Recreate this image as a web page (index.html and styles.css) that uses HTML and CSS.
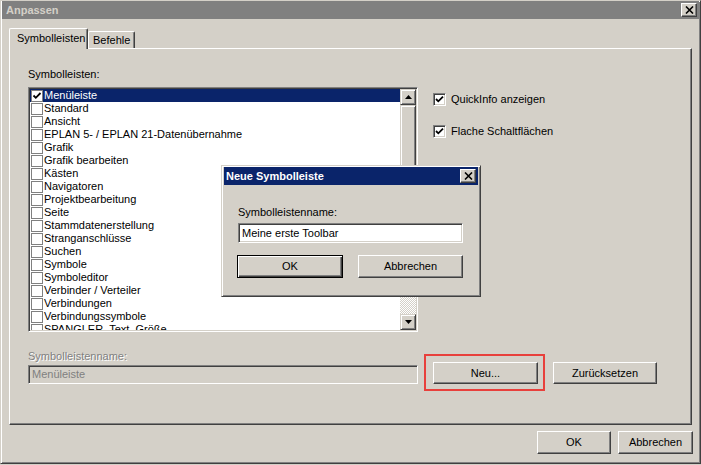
FILE: index.html
```html
<!DOCTYPE html>
<html>
<head>
<meta charset="utf-8">
<link rel="stylesheet" href="styles.css">
</head>
<body>
<div class="window">
  <div class="titlebar">
    <span class="title">Anpassen</span>
    <span class="closebtn"><svg width="9" height="8" viewBox="0 0 9 8"><path d="M1 0.5 L8 7.5 M8 0.5 L1 7.5" stroke="#000" stroke-width="1.6" fill="none"/></svg></span>
  </div>
  <div class="tabs">
    <div class="tab active">Symbolleisten</div>
    <div class="tab">Befehle</div>
  </div>
  <div class="panel">
    <div class="toprow">
      <div class="leftcol">
        <div class="label">Symbolleisten:</div>
        <div class="listbox">
          <div class="items">
            <div class="row selected"><span class="lbox"><svg width="10" height="10" viewBox="0 0 10 10"><path d="M1.5 4.5 L3.8 6.8 L8.5 2" stroke="#000" stroke-width="1.8" fill="none"/></svg></span><span class="rtext">Menüleiste</span></div>
            <div class="row"><span class="lbox"></span><span class="rtext">Standard</span></div>
            <div class="row"><span class="lbox"></span><span class="rtext">Ansicht</span></div>
            <div class="row"><span class="lbox"></span><span class="rtext">EPLAN 5- / EPLAN 21-Datenübernahme</span></div>
            <div class="row"><span class="lbox"></span><span class="rtext">Grafik</span></div>
            <div class="row"><span class="lbox"></span><span class="rtext">Grafik bearbeiten</span></div>
            <div class="row"><span class="lbox"></span><span class="rtext">Kästen</span></div>
            <div class="row"><span class="lbox"></span><span class="rtext">Navigatoren</span></div>
            <div class="row"><span class="lbox"></span><span class="rtext">Projektbearbeitung</span></div>
            <div class="row"><span class="lbox"></span><span class="rtext">Seite</span></div>
            <div class="row"><span class="lbox"></span><span class="rtext">Stammdatenerstellung</span></div>
            <div class="row"><span class="lbox"></span><span class="rtext">Stranganschlüsse</span></div>
            <div class="row"><span class="lbox"></span><span class="rtext">Suchen</span></div>
            <div class="row"><span class="lbox"></span><span class="rtext">Symbole</span></div>
            <div class="row"><span class="lbox"></span><span class="rtext">Symboleditor</span></div>
            <div class="row"><span class="lbox"></span><span class="rtext">Verbinder / Verteiler</span></div>
            <div class="row"><span class="lbox"></span><span class="rtext">Verbindungen</span></div>
            <div class="row"><span class="lbox"></span><span class="rtext">Verbindungssymbole</span></div>
            <div class="row"><span class="lbox"></span><span class="rtext">SPANGLER_Text_Größe</span></div>
          </div>
          <div class="vscroll">
            <div class="sbtn"><svg width="7" height="4" viewBox="0 0 7 4"><path d="M3.5 0 L7 4 L0 4 Z" fill="#000"/></svg></div>
            <div class="thumb"></div>
            <div class="track"></div>
            <div class="sbtn"><svg width="7" height="4" viewBox="0 0 7 4"><path d="M0 0 L7 0 L3.5 4 Z" fill="#000"/></svg></div>
          </div>
        </div>
      </div>
      <div class="rightcol">
        <div class="chk"><span class="cbox"><svg width="9" height="9" viewBox="0 0 9 9"><path d="M1 4 L3.3 6.3 L8 1.6" stroke="#000" stroke-width="1.8" fill="none"/></svg></span><span>QuickInfo anzeigen</span></div>
        <div class="chk second"><span class="cbox"><svg width="9" height="9" viewBox="0 0 9 9"><path d="M1 4 L3.3 6.3 L8 1.6" stroke="#000" stroke-width="1.8" fill="none"/></svg></span><span>Flache Schaltflächen</span></div>
      </div>
    </div>
    <div class="bottomrow">
      <div class="namefield">
        <div class="label disabled">Symbolleistenname:</div>
        <div class="field disabledfield">Menüleiste</div>
      </div>
      <div class="btn neu">Neu...</div>
      <div class="btn reset">Zurücksetzen</div>
    </div>
  </div>
  <div class="footer">
    <div class="btn okbtn">OK</div>
    <div class="btn cancelbtn">Abbrechen</div>
  </div>

  <div class="dialog">
    <div class="dtitle">
      <span class="dtitletext">Neue Symbolleiste</span>
      <span class="closebtn dclose"><svg width="9" height="8" viewBox="0 0 9 8"><path d="M1 0.5 L8 7.5 M8 0.5 L1 7.5" stroke="#000" stroke-width="1.6" fill="none"/></svg></span>
    </div>
    <div class="dbody">
      <div class="label">Symbolleistenname:</div>
      <div class="field dinput">Meine erste Toolbar</div>
      <div class="dbuttons">
        <div class="btn default dok">OK</div>
        <div class="btn dcancel">Abbrechen</div>
      </div>
    </div>
  </div>
</div>
</body>
</html>
```

FILE: styles.css
```css
* { box-sizing: border-box; }
html, body {
  margin: 0;
  padding: 0;
  background: #d4d0c8;
}
body {
  width: 701px;
  height: 465px;
  overflow: hidden;
  font-family: "Liberation Sans", Arial, sans-serif;
  font-size: 11px;
  color: #000;
}
.window {
  position: relative;
  width: 701px;
  height: 464px;
  background: #d4d0c8;
  border: 1px solid;
  border-color: #d4d0c8 #404040 #404040 #d4d0c8;
  box-shadow: inset 1px 1px #fff, inset -1px -1px #808080;
}
.titlebar {
  height: 18px;
  margin: 0 1px;
  background: #808080;
  display: flex;
  align-items: center;
  padding-left: 4px;
}
.title {
  font-weight: bold;
  color: #d4d0c8;
  line-height: 13px;
}
.closebtn {
  margin-left: auto;
  margin-right: 2px;
  width: 16px;
  height: 14px;
  background: #d4d0c8;
  border: 1px solid;
  border-color: #fff #404040 #404040 #fff;
  box-shadow: inset -1px -1px #808080;
  display: flex;
  align-items: center;
  justify-content: center;
}
.tabs {
  margin-top: 9px;
  margin-left: 8px;
  height: 20px;
  display: flex;
  align-items: flex-end;
}
.tab {
  height: 17px;
  width: 47px;
  padding: 2px 0 0 4px;
  line-height: 13px;
  border-top: 1px solid #fff;
  border-left: 1px solid #fff;
  border-right: 1px solid #404040;
  box-shadow: inset -1px 0 #808080;
  border-radius: 2px 2px 0 0;
  background: #d4d0c8;
}
.tab.active {
  position: relative;
  z-index: 1;
  height: 21px;
  width: 79px;
  margin-bottom: -1px;
  padding: 3px 0 0 7px;
}
.panel {
  margin-left: 8px;
  width: 683px;
  height: 377px;
  border: 1px solid;
  border-color: #fff #404040 #404040 #fff;
  box-shadow: inset -1px -1px #808080;
  padding: 19px 0 0 18px;
}
.toprow {
  display: flex;
}
.leftcol {
  width: 390px;
}
.label {
  line-height: 13px;
  height: 13px;
  white-space: nowrap;
}
.label.disabled {
  color: #808080;
  text-shadow: 1px 1px #fff;
}
.listbox {
  margin-top: 6px;
  width: 390px;
  height: 245px;
  border: 1px solid;
  border-color: #808080 #fff #fff #808080;
  box-shadow: inset 1px 1px #404040, inset -1px -1px #d4d0c8;
  padding: 1px;
  background: #fff;
  display: flex;
  overflow: hidden;
}
.items {
  flex: 1;
  height: 241px;
  overflow: hidden;
  background: #fff;
}
.row {
  height: 13px;
  display: flex;
  align-items: center;
  white-space: nowrap;
}
.row.selected {
  background: #0a246a;
  color: #fff;
}
.lbox {
  width: 12px;
  height: 12px;
  margin-left: 1px;
  border: 1px solid #808080;
  background: #fff;
  display: flex;
  align-items: center;
  justify-content: center;
  flex: none;
}
.rtext {
  margin-left: 1px;
  line-height: 13px;
}
.vscroll {
  width: 16px;
  height: 241px;
  display: flex;
  flex-direction: column;
}
.sbtn, .thumb {
  width: 16px;
  background: #d4d0c8;
  border: 1px solid;
  border-color: #d4d0c8 #404040 #404040 #d4d0c8;
  box-shadow: inset 1px 1px #fff, inset -1px -1px #808080;
}
.sbtn {
  height: 16px;
  display: flex;
  align-items: center;
  justify-content: center;
}
.thumb {
  height: 185px;
}
.track {
  flex: 1;
  background-color: #fff;
  background-image: repeating-conic-gradient(#d4d0c8 0 25%, #fff 0 50%);
  background-size: 2px 2px;
}
.rightcol {
  margin-left: 15px;
  padding-top: 25px;
}
.chk {
  display: flex;
  align-items: center;
  height: 13px;
  line-height: 13px;
  gap: 5px;
  white-space: nowrap;
}
.chk.second {
  margin-top: 19px;
}
.cbox {
  width: 13px;
  height: 13px;
  background: #fff;
  border: 1px solid;
  border-color: #808080 #fff #fff #808080;
  box-shadow: inset 1px 1px #404040, inset -1px -1px #d4d0c8;
  display: flex;
  align-items: center;
  justify-content: center;
  flex: none;
}
.bottomrow {
  margin-top: 18px;
  display: flex;
  align-items: flex-end;
}
.namefield {
  width: 390px;
}
.field {
  height: 19px;
  border: 1px solid;
  border-color: #808080 #fff #fff #808080;
  box-shadow: inset 1px 1px #404040, inset -1px -1px #d4d0c8;
  padding: 0 0 0 3px;
  line-height: 17px;
  background: #fff;
  white-space: nowrap;
}
.disabledfield {
  margin-top: 2px;
  background: #d4d0c8;
  color: #808080;
}
.btn {
  height: 23px;
  background: #d4d0c8;
  border: 1px solid;
  border-color: #fff #404040 #404040 #fff;
  box-shadow: inset -1px -1px #808080;
  display: flex;
  align-items: center;
  justify-content: center;
  line-height: 13px;
  white-space: nowrap;
}
.neu {
  position: relative;
  margin-left: 15px;
  width: 105px;
  height: 22px;
}
.neu::after {
  content: "";
  position: absolute;
  top: -9px;
  left: -10px;
  right: -8px;
  bottom: -8px;
  border: 2px solid #e8403c;
}
.reset {
  margin-left: 15px;
  width: 104px;
  height: 22px;
}
.footer {
  margin-top: 6px;
  margin-right: 7px;
  display: flex;
  justify-content: flex-end;
  gap: 7px;
}
.okbtn { width: 74px; }
.cancelbtn { width: 75px; }
.dialog {
  position: absolute;
  left: 220px;
  top: 164px;
  width: 260px;
  height: 132px;
  background: #d4d0c8;
  border: 1px solid;
  border-color: #d4d0c8 #404040 #404040 #d4d0c8;
  box-shadow: inset 1px 1px #fff, inset -1px -1px #808080;
  padding: 1px 2px 2px 2px;
}
.dtitle {
  height: 18px;
  background: #0a246a;
  display: flex;
  align-items: center;
  padding-left: 2px;
}
.dtitletext {
  font-weight: bold;
  color: #fff;
  line-height: 13px;
}
.dbody {
  padding-left: 14px;
  padding-top: 21px;
}
.dinput {
  margin-top: 4px;
  width: 225px;
  height: 20px;
  line-height: 18px;
}
.dbuttons {
  margin-top: 12px;
  display: flex;
}
.btn.default {
  border: 1px solid #000;
  box-shadow: inset 1px 1px #fff, inset -1px -1px #404040, inset -2px -2px #808080;
}
.dok {
  margin-left: -1px;
  width: 106px;
}
.dcancel {
  margin-left: 15px;
  width: 105px;
}
```
